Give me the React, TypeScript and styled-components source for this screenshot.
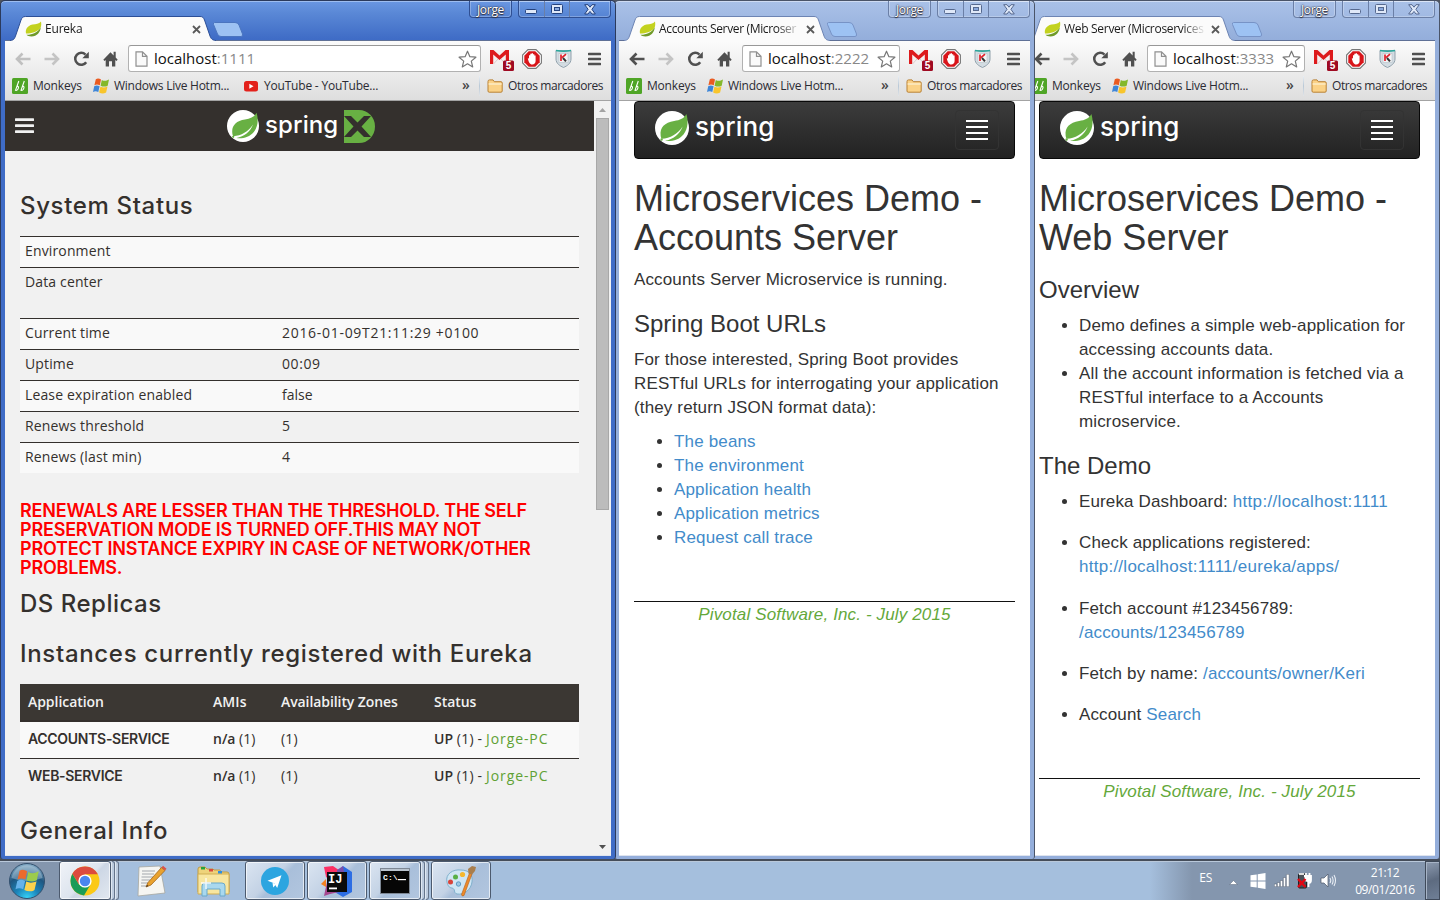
import React from "react";
import styled, { createGlobalStyle, css } from "styled-components";

const UI = `"Open Sans", "Noto Sans", sans-serif`;
const ROUND = `"Open Sans", "Noto Sans", sans-serif`;
const HEAD = `Inter, "Open Sans", sans-serif`;
const ARIAL = `"Liberation Sans", Arial, sans-serif`;

const Global = createGlobalStyle`
  *, *::before, *::after { box-sizing: border-box; }
  body { margin: 0; overflow: hidden; background: #50555e; }
  svg { display: block; flex: none; }
`;

/* ---------- shell ---------- */

const Desktop = styled.div`
  width: 1440px;
  height: 900px;
  display: flex;
  flex-direction: column;
  overflow: hidden;
`;

const Workspace = styled.div`
  position: relative;
  height: 859px;
  flex: none;
  background: #50555e;
`;

const Frame = styled.section<{ $x: number; $w: number; $z: number; $active?: boolean }>`
  position: absolute;
  top: 0;
  left: ${(p) => p.$x}px;
  width: ${(p) => p.$w}px;
  height: 859px;
  z-index: ${(p) => p.$z};
  display: flex;
  flex-direction: column;
  padding: 0 4px 3px;
  border: 1px solid ${(p) => (p.$active ? "#2b3a5c" : "#4a5468")};
  border-bottom: 0;
  border-radius: 5px 5px 3px 3px;
  background: ${(p) =>
    p.$active
      ? "linear-gradient(180deg, #6a97e2 0, #5a88d6 12px, #3f6cc6 38px, #3f6cc6 100%)"
      : "linear-gradient(180deg, #a9c1e8 0, #a3bbe4 12px, #94aedb 38px, #94aedb 100%)"};
  box-shadow: inset 0 1px 0 ${(p) => (p.$active ? "#9dbdf0" : "#cfdcf3")};
`;

const TabStrip = styled.header`
  position: relative;
  display: flex;
  align-items: flex-end;
  height: 39px;
  flex: none;
`;

const Tab = styled.div`
  position: relative;
  z-index: 1;
  width: 206px;
  height: 25px;
  margin: 0 0 -1px 5px;
  display: flex;
  align-items: center;
  padding: 1px 15px 0 15px;
`;

const TabShape = styled.svg`
  position: absolute;
  left: 0;
  top: 0;
`;

const TabTitle = styled.span<{ $ls?: number }>`
  position: relative;
  flex: 1;
  margin-left: 3px;
  overflow: hidden;
  white-space: nowrap;
  font: 12px/16px ${UI};
  letter-spacing: ${(p) => p.$ls ?? -0.35}px;
  color: #1a1a1a;
  mask-image: linear-gradient(90deg, #000 118px, transparent 142px);
`;

const Over = styled.span`
  position: relative;
  display: flex;
`;

const NewTab = styled.svg`
  margin: 0 0 3px -4px;
`;

const Caption = styled.div`
  position: absolute;
  top: 0;
  right: 0;
  display: flex;
  gap: 6px;
  height: 17px;
`;

const CaptionGroup = styled.div<{ $active?: boolean }>`
  display: flex;
  height: 17px;
  border: 1px solid ${(p) => (p.$active ? "#2f4f92" : "#6b7fa6")};
  border-top: 0;
  border-radius: 0 0 4px 4px;
  box-shadow: inset 0 0 0 1px rgba(255, 255, 255, 0.25);
`;

const CaptionButton = styled.div<{ $w: number; $active?: boolean }>`
  width: ${(p) => p.$w}px;
  display: flex;
  align-items: center;
  justify-content: center;
  & + & {
    border-left: 1px solid ${(p) => (p.$active ? "#2f4f92" : "#6b7fa6")};
  }
`;

const UserName = styled.span`
  width: 41px;
  text-align: center;
  font: 12px/18px ${UI};
  letter-spacing: -0.3px;
  color: #fff;
  text-shadow: 0 0 1px #223, 0 0 2px #334, 0 1px 1px #334;
`;

const Chrome = styled.div`
  flex: none;
  height: 61px;
  display: flex;
  flex-direction: column;
  background: linear-gradient(180deg, #fbfbfb 0, #ebebeb 32px, #dedede 100%);
  border-top: 1px solid #5f7096;
  border-bottom: 1px solid #a3a3a3;
`;

const Toolbar = styled.div`
  display: flex;
  align-items: center;
  height: 34px;
  padding: 1px 10px 0 10px;
`;

const NavIcons = styled.div`
  display: flex;
  align-items: center;
  gap: 13px;
  width: 113px;
  flex: none;
`;

const Omnibox = styled.div`
  flex: 1;
  min-width: 0;
  height: 27px;
  display: flex;
  align-items: center;
  border: 1px solid #b1b1b1;
  border-top-color: #989898;
  border-radius: 3px;
  background: #fff;
  padding: 0 3px 0 6px;
`;

const Url = styled.span`
  flex: 1;
  margin: -2px 0 0 6px;
  white-space: nowrap;
  font: 15px/24px ${UI};
  letter-spacing: 0;
  color: #111;
  i {
    font-style: normal;
    color: #888;
  }
`;

const ExtIcons = styled.div`
  display: flex;
  align-items: center;
  margin-left: 9px;
  flex: none;
`;

const Bookmarks = styled.div`
  display: flex;
  align-items: center;
  height: 25px;
  padding: 0 8px 3px 7px;
`;

const BookmarkText = styled.span<{ $w: number; $ls: number }>`
  flex: none;
  width: ${(p) => p.$w}px;
  margin-left: 5px;
  white-space: nowrap;
  font: 12px/18px ${UI};
  letter-spacing: ${(p) => p.$ls}px;
  color: #2b2b33;
`;

const Chevron = styled.span`
  margin-left: auto;
  width: 17px;
  font: 600 14px/16px ${UI};
  color: #444;
  padding-bottom: 2px;
`;

const Separator = styled.span`
  width: 1px;
  height: 20px;
  background: linear-gradient(#e8eef4, #b9c8d6, #e0e4e8);
  margin-right: 7px;
`;

const Viewport = styled.main<{ $bg: string }>`
  flex: 1;
  min-height: 0;
  display: flex;
  overflow: hidden;
  background: ${(p) => p.$bg};
  border-bottom: 1px solid #dfe4ee;
`;

/* ---------- icons ---------- */

const Leaf = () => (
  <svg width="17" height="16" viewBox="0 0 17 16">
    <path d="M16 .5C14 3 11 2.800 7.500 3.600C2 5 .3 8.500 1 12.500C7 12.500 12 11 15.500 7C16.500 4.500 16.300 2.500 16 .5Z" fill="#c3d21f" />
    <path d="M1.500 13.800C7 14 12.500 11.500 15.700 6.500C15.500 11 12 15.500 6.500 15.500C4 15.500 2.500 15 1.500 13.800Z" fill="#6f9a28" />
  </svg>
);

const CloseX = () => (
  <svg width="9" height="9" viewBox="0 0 9 9">
    <path d="M1 1L8 8M8 1L1 8" stroke="#5a5a5a" strokeWidth="1.800" />
  </svg>
);

const Arrow = ({ flip, color }: { flip?: boolean; color: string }) => (
  <svg width="16" height="14" viewBox="0 0 16 14">
    <path
      d={flip ? "M8.500 1.500L14 7L8.500 12.500M14 7H.5" : "M7.500 1.500L2 7L7.500 12.500M2 7H15.500"}
      fill="none"
      stroke={color}
      strokeWidth="2.600"
    />
  </svg>
);

const Reload = () => (
  <svg width="17" height="16" viewBox="0 0 17 16">
    <path d="M13.200 11.200A6 6 0 1 1 12.500 3.600" fill="none" stroke="#505050" strokeWidth="2.500" />
    <path d="M15.800 .8V7.300H9.300Z" fill="#505050" />
  </svg>
);

const Home = () => (
  <svg width="15" height="16" viewBox="0 0 15 16">
    <path d="M7.500 1.300L.3 8.700L1.600 9.900L2.700 9V15.500H6V10.300H9V15.500H12.300V9L13.400 9.900L14.700 8.700L12.700 6.600V.8H10.600V4.500Z" fill="#505050" />
  </svg>
);

const PageIcon = () => (
  <svg width="13" height="16" viewBox="0 0 13 16">
    <path d="M1 .8H7.500L12 5.300V15.200H1Z M7.500 .8V5.300H12" fill="#fafafa" stroke="#909090" strokeWidth="1.200" />
  </svg>
);

const Star = () => (
  <svg width="19" height="18" viewBox="0 0 19 18">
    <path d="M9.500 1.200L11.900 6.700L17.900 7.200L13.300 11.100L14.700 16.900L9.500 13.800L4.300 16.900L5.700 11.100L1.100 7.200L7.100 6.700Z" fill="#fff" stroke="#777" strokeWidth="1.200" strokeLinejoin="round" />
  </svg>
);

const Gmail = () => (
  <svg width="24" height="24" viewBox="0 0 24 24">
    <rect x="0" y="3" width="19" height="14" fill="#f4f0f0" />
    <path d="M0 3H3.500L9.500 8.500L15.500 3H19V17H15.800V7.500L9.500 13L3.200 7.500V17H0Z" fill="#dd1a1c" />
    <path d="M3.500 17L8 12M15.500 17L11 12" stroke="#dcc" />
    <rect x="13" y="13.500" width="11" height="10.500" rx="1.500" fill="#9f0a22" />
    <text x="18.500" y="22.200" textAnchor="middle" fontFamily="Liberation Sans, sans-serif" fontWeight="700" fontSize="10" fill="#fff">5</text>
  </svg>
);

const Adblock = () => (
  <svg width="20" height="20" viewBox="0 0 20 20" style={{ marginLeft: 8 }}>
    <path d="M6 .6H14L19.400 6V14L14 19.400H6L.6 14V6Z" fill="#fff" stroke="#777" strokeWidth="1.100" />
    <path d="M6.700 2.300H13.300L17.700 6.700V13.300L13.300 17.700H6.700L2.300 13.300V6.700Z" fill="#d8151a" />
    <path d="M5.800 9.500L7 9.200V6.200H8.300V4.800H9.700V4.200H11V5.200H12.300V6.500H13.600V12C13.600 14 12.200 15.600 10.200 15.600C7.800 15.600 6.600 12.800 5.800 9.500Z" fill="#fff" />
  </svg>
);

const Shield = () => (
  <svg width="17" height="19" viewBox="0 0 17 19" style={{ marginLeft: 13 }}>
    <path d="M1 1.500H16V10C16 14.500 12 17 8.500 18.500C5 17 1 14.500 1 10Z" fill="#d3dce2" stroke="#91a1ac" />
    <path d="M1 1.500Q8.500 3 16 1.500" stroke="#2aa79b" strokeWidth="1.600" fill="none" />
    <rect x="4" y="4.500" width="9" height="9" fill="#f4f5f6" stroke="#b5c0c8" strokeWidth=".6" />
    <path d="M6 5.500V12M11 5.200L7 8.600" stroke="#e0202a" strokeWidth="1.700" />
    <path d="M8 9L11 12.300" stroke="#333" strokeWidth="2" />
  </svg>
);

const MenuIcon = () => (
  <svg width="13" height="14" viewBox="0 0 13 14" style={{ marginLeft: 16 }}>
    <path d="M1 2H12M1 7H12M1 12H12" stroke="#505050" strokeWidth="2.600" strokeLinecap="round" />
  </svg>
);

const Monkeys = () => (
  <svg width="16" height="16" viewBox="0 0 16 16">
    <rect width="16" height="16" rx="1.500" fill="#4fa526" />
    <path d="M6.800 3L3.500 12.300C5.500 13 7 10 6.300 8.600C5.600 8 4.700 8.800 4.600 9.500M12.300 3L9 12.300C11 13 12.500 10 11.800 8.600C11.100 8 10.200 8.800 10.100 9.500" fill="none" stroke="#fff" strokeWidth="1.100" />
  </svg>
);

const WinFlag = () => (
  <svg width="16" height="16" viewBox="0 0 16 16">
    <path d="M2.800 1.200C4.800 -.2 6.500 .6 8 1.500L6.800 7.300C4.900 6.300 3.200 6.200 1.400 7.300Z" fill="#ea5b21" />
    <path d="M8.800 2C11 3.200 13 3.200 16 1.600L14.700 7.700C12.300 9 10 8.800 7.600 7.700Z" fill="#84b82a" />
    <path d="M1.200 8.200C3.100 7.100 4.700 7.300 6.600 8.200L5.300 14C3.300 13 1.700 13 0 14Z" fill="#3e86d8" />
    <path d="M7.400 8.700C9.700 9.800 11.700 9.800 14.500 8.500L13.100 14.400C10.700 15.900 8.300 15.600 6.100 14.500Z" fill="#f8c52c" />
  </svg>
);

const YouTube = () => (
  <svg width="15" height="11" viewBox="0 0 15 11">
    <rect width="14" height="10.500" rx="2.500" fill="#e3211b" />
    <path d="M5.300 2.700L9.500 5.200L5.300 7.700Z" fill="#fff" />
  </svg>
);

const Folder = () => (
  <svg width="16" height="14" viewBox="0 0 16 14">
    <path d="M1 12V2.500Q1 .9 2.500 .9H6L7.300 2.700H14Q15.200 2.700 15.200 4V12Q15.200 13.200 14 13.200H2.200Q1 13.200 1 12Z" fill="#fbd287" stroke="#b98135" />
    <path d="M1.600 5H14.600" stroke="#fdebc5" strokeWidth="1.500" />
  </svg>
);

const SpringMark = ({ size }: { size: number }) => (
  <svg width={size} height={size} viewBox="0 0 32 32">
    <circle cx="16" cy="16" r="16" fill="#fff" />
    <path d="M29.500 2.800C27.500 7 23.500 8.500 18 9.400C9 10.800 4.500 15.500 5.300 23C5.400 24.500 5.800 25.600 6.500 26.200C14 25.800 21.500 21.500 26 14.500C23.500 21.500 17 26.800 9.500 28C15 29 22.500 27.300 26.800 22C31.500 16 31.300 8.500 29.500 2.800Z" fill="#68b043" />
    <circle cx="6.200" cy="26.800" r="1.100" fill="#68b043" />
  </svg>
);

/* ---------- browser window ---------- */

type WindowProps = {
  x: number;
  w: number;
  z: number;
  active?: boolean;
  title: string;
  titleSpacing?: number;
  port: string;
  bg: string;
  back: boolean;
  youtube?: boolean;
  children: React.ReactNode;
};

function BrowserWindow({ x, w, z, active, title, titleSpacing, port, bg, back, youtube, children }: WindowProps) {
  const edge = active ? "#2c4f97" : "#6d84b3";
  const glyph = active ? "#24427e" : "#56698f";
  return (
    <Frame $x={x} $w={w} $z={z} $active={active}>
      <TabStrip>
        <Tab>
          <TabShape width="206" height="25" viewBox="0 0 206 25">
            <path d="M0 24.500C4 24.300 4.500 22.500 5.500 20L11 4C12 1.500 13 .5 15.500 .5H190C192.500 .5 193.500 1.500 194.500 4L200 20C201 22.500 202 24.300 206 24.500V25H0Z" fill="#fbfbfb" />
            <path d="M0 24.500C4 24.300 4.500 22.500 5.500 20L11 4C12 1.500 13 .5 15.500 .5H190C192.500 .5 193.500 1.500 194.500 4L200 20C201 22.500 202 24.300 206 24.500" fill="none" stroke={edge} />
          </TabShape>
          <Over><Leaf /></Over>
          <TabTitle $ls={titleSpacing}>{title}</TabTitle>
          <Over><CloseX /></Over>
        </Tab>
        <NewTab width="32" height="15" viewBox="0 0 32 15">
          <path d="M2.500 .5H23Q26 .5 27 3L30.500 12Q31 14.500 29 14.500H9Q6.500 14.500 5.500 12L1.500 2.500Q1 .5 2.500 .5Z" fill="#9dc2f3" stroke={active ? "#4b75bf" : "#7793c6"} />
        </NewTab>
        <Caption>
          <CaptionGroup $active={active}>
            <UserName>Jorge</UserName>
          </CaptionGroup>
          <CaptionGroup $active={active}>
            <CaptionButton $w={25} $active={active}>
              <svg width="13" height="6" viewBox="0 0 13 6" style={{ marginTop: 5 }}>
                <rect x=".5" y=".5" width="11" height="4" rx="1" fill="#dfe8f8" stroke={glyph} />
              </svg>
            </CaptionButton>
            <CaptionButton $w={25} $active={active}>
              <svg width="12" height="10" viewBox="0 0 12 10">
                <rect x=".5" y=".5" width="11" height="9" rx="1" fill="#dfe8f8" stroke={glyph} />
                <rect x="3.500" y="3.500" width="5" height="3" fill="#8aa9de" stroke={glyph} />
              </svg>
            </CaptionButton>
            <CaptionButton $w={41} $active={active}>
              <svg width="12" height="11" viewBox="0 0 12 11">
                <path d="M.7 .7H4L6 3.200L8 .7H11.300L7.900 5.300L11.300 10H8L6 7.400L4 10H.7L4.100 5.300Z" fill="#dfe8f8" stroke={glyph} />
              </svg>
            </CaptionButton>
          </CaptionGroup>
        </Caption>
      </TabStrip>
      <Chrome>
        <Toolbar>
          <NavIcons>
            <Arrow color={back ? "#505050" : "#c0c0c0"} />
            <Arrow flip color="#c4c4c4" />
            <Reload />
            <Home />
          </NavIcons>
          <Omnibox>
            <PageIcon />
            <Url>localhost<i>:{port}</i></Url>
            <Star />
          </Omnibox>
          <ExtIcons>
            <Gmail />
            <Adblock />
            <Shield />
            <MenuIcon />
          </ExtIcons>
        </Toolbar>
        <Bookmarks>
          <Monkeys />
          <BookmarkText $w={60} $ls={-0.2}>Monkeys</BookmarkText>
          <WinFlag />
          <BookmarkText $w={130} $ls={-0.25}>Windows Live Hotm...</BookmarkText>
          {youtube && (
            <>
              <YouTube />
              <BookmarkText $w={120} $ls={-0.2}>YouTube - YouTube...</BookmarkText>
            </>
          )}
          <Chevron>»</Chevron>
          <Separator />
          <Folder />
          <BookmarkText $w={95} $ls={-0.4}>Otros marcadores</BookmarkText>
        </Bookmarks>
      </Chrome>
      <Viewport $bg={bg}>{children}</Viewport>
    </Frame>
  );
}

/* ---------- Eureka page ---------- */

const EurekaPage = styled.div`
  flex: 1;
  height: 100%;
  overflow: hidden;
  font: 14px/20px ${ROUND};
  color: #34302d;
`;

const EurekaHeader = styled.div`
  height: 50px;
  background: #34302d;
  display: flex;
  align-items: center;
  padding-left: 10px;
`;

const Burger = styled.svg`
  margin-right: 193px;
`;

const SpringWord = styled.span<{ $size: number; $ls: number; $mt?: number }>`
  font: 500 ${(p) => p.$size}px/32px ${HEAD};
  letter-spacing: ${(p) => p.$ls}px;
  color: #fff;
  margin: ${(p) => p.$mt ?? -3}px 0 0 6px;
`;

const EurekaBody = styled.div`
  width: 574px;
  padding: 41px 0 0 15px;
`;

const EurekaHeading = styled.h1<{ $mt?: number; $mb: number; $ls: number }>`
  margin: ${(p) => p.$mt ?? 0}px 0 ${(p) => p.$mb}px;
  font: 500 24px/28px ${HEAD};
  letter-spacing: ${(p) => p.$ls}px;
  white-space: nowrap;
`;

const StatusRow = styled.div<{ $tall?: boolean; $odd?: boolean }>`
  display: flex;
  height: ${(p) => (p.$tall ? 51 : 31)}px;
  border-top: 1px solid #34302d;
  padding: 4px 5px 0;
  background: ${(p) => (p.$odd ? "#f9f9f9" : "transparent")};
`;

const Txt = styled.span<{ $w?: number; $ls?: number; $bold?: boolean; $wide?: boolean; $color?: string }>`
  flex: none;
  ${(p) => p.$w && css`width: ${p.$w}px;`}
  white-space: nowrap;
  letter-spacing: ${(p) => p.$ls ?? 0}px;
  font-weight: ${(p) => (p.$bold ? 600 : 400)};
  ${(p) => p.$wide && css`font-family: ${HEAD};`}
  ${(p) => p.$color && css`color: ${p.$color};`}
`;

const Warning = styled.div`
  margin: 28px 0 13px;
  font: 600 18px/19px ${HEAD};
  color: #f00;
  white-space: nowrap;
`;

const WarningLine = styled.div<{ $ls: number }>`
  letter-spacing: ${(p) => p.$ls}px;
`;

const InstHead = styled.div`
  display: flex;
  align-items: center;
  height: 38px;
  padding: 0 8px;
  background: #3b3733;
  border-bottom: 2px solid #34302d;
  color: #f1f1f1;
`;

const InstRow = styled.div<{ $odd?: boolean }>`
  display: flex;
  align-items: center;
  height: 37px;
  padding: 0 8px ${(p) => (p.$odd ? 2 : 3)}px;
  background: ${(p) => (p.$odd ? "#f9f9f9" : "transparent")};
  border-bottom: ${(p) => (p.$odd ? "1px solid #34302d" : "0")};
`;

const Scrollbar = styled.div`
  width: 17px;
  flex: none;
  display: flex;
  flex-direction: column;
  align-items: center;
  background: #f1f1f1;
`;

const Thumb = styled.div`
  width: 13px;
  height: 392px;
  margin: 6px 0 auto;
  background: #bcbcbc;
  border: 1px solid #a8a8a8;
`;

const STATUS: { label: string; value: string; vls?: number; tall?: boolean }[] = [
  { label: "Environment", value: "" },
  { label: "Data center", value: "", tall: true },
  { label: "Current time", value: "2016-01-09T21:11:29 +0100", vls: 0.7 },
  { label: "Uptime", value: "00:09", vls: 0.6 },
  { label: "Lease expiration enabled", value: "false" },
  { label: "Renews threshold", value: "5" },
  { label: "Renews (last min)", value: "4" },
];

function Eureka() {
  return (
    <>
      <EurekaPage>
        <EurekaHeader>
          <Burger width="19" height="16" viewBox="0 0 19 16">
            <path d="M1 1.700H18M1 7.700H18M1 13.700H18" stroke="#f1f1f1" strokeWidth="2.800" strokeLinecap="round" />
          </Burger>
          <SpringMark size={32} />
          <SpringWord $size={24} $ls={0.1} $mt={-2}>spring</SpringWord>
          <svg width="31" height="33" viewBox="0 0 31 33" style={{ marginLeft: 6 }}>
            <path d="M0 0H15A16 16.500 0 0 1 15 33H0Z" fill="#68b043" />
            <path d="M0 6H7L13.500 12.500L20 6H27L17.500 16.500L27 27H20L13.500 20.500L7 27H0L9.500 16.500Z" fill="#34302d" />
          </svg>
        </EurekaHeader>
        <EurekaBody>
          <EurekaHeading $mb={16} $ls={0.65}>System Status</EurekaHeading>
          {STATUS.map((s, i) => (
            <StatusRow key={s.label} $tall={s.tall} $odd={i % 2 === 0}>
              <Txt $w={257} $ls={0.14}>{s.label}</Txt>
              <Txt $ls={s.vls}>{s.value}</Txt>
            </StatusRow>
          ))}
          <Warning>
            <WarningLine $ls={-0.2}>RENEWALS ARE LESSER THAN THE THRESHOLD. THE SELF</WarningLine>
            <WarningLine $ls={-0.2}>PRESERVATION MODE IS TURNED OFF.THIS MAY NOT</WarningLine>
            <WarningLine $ls={-0.2}>PROTECT INSTANCE EXPIRY IN CASE OF NETWORK/OTHER</WarningLine>
            <WarningLine $ls={-0.2}>PROBLEMS.</WarningLine>
          </Warning>
          <EurekaHeading $mb={22} $ls={0.5}>DS Replicas</EurekaHeading>
          <EurekaHeading $mb={16} $ls={0.68}>Instances currently registered with Eureka</EurekaHeading>
          <InstHead>
            <Txt $w={185} $bold $ls={-0.05}>Application</Txt>
            <Txt $w={68} $bold $ls={0.1}>AMIs</Txt>
            <Txt $w={153} $bold $ls={-0.08}>Availability Zones</Txt>
            <Txt $bold $ls={-0.05}>Status</Txt>
          </InstHead>
          {["ACCOUNTS-SERVICE", "WEB-SERVICE"].map((name, i) => (
            <InstRow key={name} $odd={i === 0}>
              <Txt $w={185} $bold $wide $ls={-0.3}>{name}</Txt>
              <Txt $w={68}><Txt $bold>n/a</Txt> (1)</Txt>
              <Txt $w={153} $ls={0.2}>(1)</Txt>
              <Txt $ls={0.2}><Txt $bold>UP</Txt> (1) - <Txt $ls={0.9} $color="#5fa134">Jorge-PC</Txt></Txt>
            </InstRow>
          ))}
          <EurekaHeading $mt={21} $mb={0} $ls={0.7}>General Info</EurekaHeading>
        </EurekaBody>
      </EurekaPage>
      <Scrollbar>
        <svg width="7" height="4" viewBox="0 0 7 4" style={{ marginTop: 7 }}>
          <path d="M0 4L3.500 0L7 4Z" fill="#a3a3a3" />
        </svg>
        <Thumb />
        <svg width="7" height="4" viewBox="0 0 7 4" style={{ marginBottom: 6 }}>
          <path d="M0 0L3.500 4L7 0Z" fill="#505050" />
        </svg>
      </Scrollbar>
    </>
  );
}

/* ---------- Bootstrap pages ---------- */

const DemoPage = styled.div`
  width: 396px;
  padding-left: 15px;
  height: 100%;
  flex: none;
  overflow: hidden;
  font: 17px/24px ${ARIAL};
  letter-spacing: 0.14px;
  color: #333;
  h1 { margin: 20px 0 11px; font: 500 36px/39px ${ARIAL}; letter-spacing: 0; }
  h2 { margin: 19px 0 11px; font: 500 24px/26px ${ARIAL}; letter-spacing: 0; }
  h1 + h2 { margin-top: 20px; }
  p { margin: 0; }
`;

const Link = styled.a<{ $ls?: number }>`
  color: #428bca;
  text-decoration: none;
  letter-spacing: ${(p) => p.$ls ?? 0.16}px;
`;

const NavBar = styled.nav`
  display: flex;
  justify-content: space-between;
  align-items: center;
  height: 58px;
  padding: 0 15px 0 20px;
  border: 1px solid #080808;
  border-radius: 4px;
  background: linear-gradient(180deg, #3c3c3c, #222);
`;

const Brand = styled.div`
  display: flex;
  align-items: center;
  padding-bottom: 5px;
`;

const Toggle = styled.div`
  width: 44px;
  height: 40px;
  display: flex;
  flex-direction: column;
  align-items: center;
  justify-content: center;
  gap: 4px;
  border: 1px solid #333;
  border-radius: 4px;
`;

const ToggleBar = styled.span`
  width: 22px;
  height: 2px;
  background: #fff;
`;

const List = styled.ul<{ $gap: number; $mt?: number }>`
  margin: ${(p) => p.$mt ?? 0}px 0 0;
  padding: 0 0 0 40px;
  display: flex;
  flex-direction: column;
  gap: ${(p) => p.$gap}px;
`;

const Item = styled.li`
  white-space: nowrap;
`;

const Footer = styled.footer`
  margin-top: 51px;
  border-top: 1px solid #111;
  text-align: center;
  font-style: italic;
  color: #64a83a;
  padding-top: 1px;
`;

function SpringNav() {
  return (
    <NavBar>
      <Brand>
        <SpringMark size={34} />
        <SpringWord $size={26} $ls={0.1} $mt={-2}>spring</SpringWord>
      </Brand>
      <Toggle>
        <ToggleBar />
        <ToggleBar />
        <ToggleBar />
        <ToggleBar />
      </Toggle>
    </NavBar>
  );
}

function Accounts() {
  return (
    <DemoPage>
      <SpringNav />
      <h1>Microservices Demo -<br />Accounts Server</h1>
      <p>Accounts Server Microservice is running.</p>
      <h2>Spring Boot URLs</h2>
      <p>
        For those interested, Spring Boot provides<br />
        RESTful URLs for interrogating your application<br />
        (they return JSON format data):
      </p>
      <List $gap={0} $mt={10}>
        {["The beans", "The environment", "Application health", "Application metrics", "Request call trace"].map((t) => (
          <Item key={t}><Link>{t}</Link></Item>
        ))}
      </List>
      <Footer>Pivotal Software, Inc. - July 2015</Footer>
    </DemoPage>
  );
}

function WebServer() {
  return (
    <DemoPage>
      <SpringNav />
      <h1>Microservices Demo -<br />Web Server</h1>
      <h2>Overview</h2>
      <List $gap={0}>
        <Item>Demo defines a simple web-application for<br />accessing accounts data.</Item>
        <Item>All the account information is fetched via a<br />RESTful interface to a Accounts<br />microservice.</Item>
      </List>
      <h2>The Demo</h2>
      <List $gap={17.3}>
        <Item>Eureka Dashboard: <Link $ls={0.33}>http://localhost:1111</Link></Item>
        <Item>Check applications registered:<br /><Link $ls={0.26}>http://localhost:1111/eureka/apps/</Link></Item>
        <Item>Fetch account #123456789:<br /><Link>/accounts/123456789</Link></Item>
        <Item>Fetch by name: <Link>/accounts/owner/Keri</Link></Item>
        <Item>Account <Link>Search</Link></Item>
      </List>
      <Footer>Pivotal Software, Inc. - July 2015</Footer>
    </DemoPage>
  );
}

/* ---------- taskbar ---------- */

const Taskbar = styled.footer`
  flex: none;
  height: 41px;
  display: flex;
  border-top: 2px solid #454d5a;
  box-shadow: inset 0 1px 0 #b9c8da;
  background: linear-gradient(90deg, #8496ae 0, #8496ae 112px, #a5bfdd 120px, #a5bfdd 1150px, #8496ae 1192px, #8496ae 100%);
`;

const Slot = styled.div<{ $w: number; $ml?: number }>`
  width: ${(p) => p.$w}px;
  margin-left: ${(p) => p.$ml ?? 0}px;
  display: flex;
  align-items: center;
  justify-content: center;
`;

const TaskButton = styled(Slot)`
  height: 39px;
  border: 1px solid #4c5a6e;
  border-radius: 3px;
  box-shadow: inset 0 0 0 1px rgba(255, 255, 255, 0.65);
  background: linear-gradient(135deg, #dbe5f1 0, #c3d2e5 45%, #a9bfda 55%, #b2c6df 100%);
`;

const ActiveTaskButton = styled(TaskButton)`
  background: linear-gradient(135deg, #f0f3f8 0, #dde4ee 50%, #cdd7e5 55%, #e2e8f0 100%);
`;

const Stack = styled.div`
  width: 4px;
  height: 39px;
  border: 1px solid #64748b;
  border-left-color: #dfe8f2;
  border-radius: 0 3px 3px 0;
  background: #bccbde;
`;

const Tray = styled.div`
  margin-left: auto;
  display: flex;
  align-items: center;
  font: 12px/16px ${UI};
  color: #fff;
`;

const Clock = styled.div`
  width: 64px;
  margin: 0 7px 0 16px;
  text-align: center;
  letter-spacing: -0.4px;
  line-height: 17px;
`;

const ShowDesktop = styled.div`
  align-self: stretch;
  width: 15px;
  margin-left: 1px;
  border: 1px solid #3f4a5a;
  background: linear-gradient(160deg, #8d9bb0, #5d6b80 50%, #6f7f96);
  box-shadow: inset 1px 1px 0 #a7b4c6;
`;

const StartOrb = () => (
  <svg width="38" height="38" viewBox="0 0 38 38">
    <defs>
      <radialGradient id="orb" cx=".5" cy="1" r=".95">
        <stop offset="0" stopColor="#38d7fb" />
        <stop offset=".35" stopColor="#1c86bb" />
        <stop offset=".7" stopColor="#1f5680" />
        <stop offset="1" stopColor="#7ea6c2" />
      </radialGradient>
    </defs>
    <circle cx="19" cy="19" r="17.500" fill="url(#orb)" stroke="#33506e" />
    <path d="M3.500 16A15.800 15.800 0 0 1 34.500 16Q19 22 3.500 16Z" fill="#dbe8f2" opacity=".35" />
    <g transform="translate(7.500 7) scale(1.450)">
      <path d="M2.800 1.200C4.800 -.2 6.500 .6 8 1.500L6.800 7.300C4.900 6.300 3.200 6.200 1.400 7.300Z" fill="#ec6a2c" />
      <path d="M8.800 2C11 3.200 13 3.200 16 1.600L14.700 7.700C12.300 9 10 8.800 7.600 7.700Z" fill="#9ccb4c" />
      <path d="M1.200 8.200C3.100 7.100 4.700 7.300 6.600 8.200L5.300 14C3.300 13 1.700 13 0 14Z" fill="#66b2ea" />
      <path d="M7.400 8.700C9.700 9.800 11.700 9.800 14.500 8.500L13.100 14.400C10.700 15.900 8.300 15.600 6.100 14.500Z" fill="#fcd24d" />
    </g>
  </svg>
);

const ChromeIcon = () => (
  <svg width="30" height="30" viewBox="0 0 30 30">
    <circle cx="15" cy="15" r="14.500" fill="#fbc916" />
    <path d="M2.400 7.800L9 18.500L15 21.500L20.500 18.500L14 29.400A14.500 14.500 0 0 1 2.400 7.800Z" fill="#1a9c57" />
    <path d="M2.400 7.800A14.500 14.500 0 0 1 27.800 8.300H15L8.800 18Z" fill="#dc4b3e" />
    <circle cx="15" cy="15" r="6.600" fill="#fff" />
    <circle cx="15" cy="15" r="5.200" fill="#4a86f0" />
  </svg>
);

const NotesIcon = () => (
  <svg width="32" height="32" viewBox="0 0 32 32">
    <path d="M4 2L25 1L30 28L3 31Z" fill="#f5f5f2" stroke="#a7a79f" strokeWidth=".8" />
    <path d="M7 6H20M7 9H19M6.500 12H18M6.500 15H15M6 18H13M6 21H11" stroke="#a3a7ab" strokeWidth="1.200" />
    <path d="M11 22L13 17.500L26.500 2.500L30 5.500L16 20Z" fill="#e9a22e" stroke="#a3661b" strokeWidth=".8" />
    <path d="M26.500 2.500L28 .8L31.500 3.800L30 5.500Z" fill="#d9534a" />
    <path d="M11 22L12 19.700L13.500 21Z" fill="#4a3a28" />
  </svg>
);

const ExplorerIcon = () => (
  <svg width="34" height="32" viewBox="0 0 34 32">
    <path d="M2 4Q2 2 4 2H9L11 4H17L18 5H24L25 7H31Q33 7 33 9V27H2Z" fill="#eed37b" stroke="#bf9a41" />
    <path d="M2 9H33V29H2Z" fill="#f8e6a0" stroke="#d1ae55" />
    <rect x="5" y="2" width="4" height="2.500" fill="#26a33c" />
    <rect x="13" y="4" width="4" height="2.500" fill="#dd4a3c" />
    <rect x="22" y="6" width="4" height="2.500" fill="#2d8fe0" />
    <path d="M6 31V21Q6 18 9 18H26Q29 18 29 21V31H24V24H11V31Z" fill="#a9d8ee" stroke="#69a9cc" />
    <path d="M10 13V24M5 18H15" stroke="#fff" strokeWidth="1.300" opacity=".9" />
  </svg>
);

const TelegramIcon = () => (
  <svg width="28" height="28" viewBox="0 0 28 28">
    <circle cx="14" cy="14" r="14" fill="#2ca5e0" />
    <path d="M6.500 13.700L20.500 8.300L16.200 21L13.200 16.300Z" fill="#fff" />
    <path d="M11.500 15.500L12.200 20.500L15 17.500Z" fill="#fff" />
  </svg>
);

const IdeaIcon = () => (
  <svg width="32" height="32" viewBox="0 0 32 32">
    <path d="M3 2L12 1L22 8L16 20L5 12Z" fill="#fb3064" />
    <path d="M18 6L22 1L31 7V27L22 32L12 26Z" fill="#2c6de4" />
    <path d="M0 19L5 14V22Z" fill="#f58220" />
    <path d="M3 31L6 17L18 27L9 29Z" fill="#a5478f" />
    <path d="M16 5L22 1L24 12H16Z" fill="#7b4fa9" />
    <rect x="6" y="7" width="20" height="20" fill="#0b0b0b" />
    <text x="7" y="18" fontFamily="Liberation Mono, monospace" fontWeight="700" fontSize="12" fill="#fff">IJ</text>
    <rect x="8" y="22.500" width="8" height="1.800" fill="#fff" />
  </svg>
);

const CmdIcon = () => (
  <svg width="30" height="26" viewBox="0 0 30 26">
    <rect x=".5" y=".5" width="29" height="25" fill="#060606" stroke="#7d8794" />
    <rect x="1" y="1" width="28" height="2" fill="#b9c3ce" />
    <text x="3" y="11.500" fontFamily="Liberation Mono, monospace" fontWeight="700" fontSize="8" letterSpacing=".2" fill="#fff">C:\</text>
    <rect x="18" y="11" width="8" height="1.200" fill="#fff" />
  </svg>
);

const PaintIcon = () => (
  <svg width="34" height="32" viewBox="0 0 34 32">
    <path d="M3 17C1 9 9 4 17 5C25 5 29 10 28 17C27 25 20 30 13 29C9 28 12 24 8 23C5 23 3.500 20 3 17Z" fill="#cfe6f4" stroke="#7fb0cd" />
    <circle cx="6.500" cy="17" r="2.500" fill="#d8433a" />
    <circle cx="11.500" cy="12" r="2.500" fill="#58b047" />
    <circle cx="18.500" cy="9.500" r="2.600" fill="#f5b72d" />
    <circle cx="14.500" cy="19" r="2.200" fill="#9cc8e4" stroke="#5f9cc4" />
    <path d="M17.500 29.500L25.500 8L28 9L20 30.500Q18 32 17.500 29.500Z" fill="#ed8a2a" stroke="#b4601a" strokeWidth=".6" />
    <path d="M24.500 8.500L24 4L28 1L32 2L31 6L28 9.500Z" fill="#a97e4d" />
  </svg>
);

function TrayIcons() {
  return (
    <>
      <svg width="9" height="5" viewBox="0 0 9 5" style={{ marginLeft: 17, marginTop: 3 }}>
        <path d="M.5 4.500L4.500 .5L8.500 4.500Z" fill="#fff" stroke="#5a6678" strokeWidth=".5" />
      </svg>
      <svg width="16" height="16" viewBox="0 0 16 16" style={{ marginLeft: 12 }}>
        <path d="M.5 2.300L6.700 1.400V7.400H.5ZM7.700 1.200L15.500 0V7.400H7.700ZM.5 8.400H6.700V14.500L.5 13.700ZM7.700 8.400H15.500V15.900L7.700 14.700Z" fill="#fff" />
      </svg>
      <svg width="16" height="13" viewBox="0 0 16 13" style={{ marginLeft: 8 }}>
        <path d="M.3 10H2.700V12.700H.3ZM3.300 8.500H5.700V12.700H3.300ZM6.300 6.500H8.700V12.700H6.300ZM9.300 3.500H11.700V12.700H9.300ZM12.300 .3H15.200V12.700H12.300Z" fill="#fff" stroke="#4b5769" strokeWidth=".5" />
      </svg>
      <svg width="16" height="17" viewBox="0 0 16 17" style={{ marginLeft: 7 }}>
        <rect x="1.500" y="2" width="8" height="14" rx="1" fill="#4b5058" stroke="#222" />
        <path d="M2 1H7V3H2Z" fill="#ddd" />
        <path d="M7 4H14V8Q14 11 11.500 11V15M9 4V1M12.500 4V1" stroke="#fff" strokeWidth="1.800" fill="none" />
        <path d="M7.500 4.500H14V8Q14 10 11 10Q8 10 7.500 8Z" fill="#fff" />
        <path d="M1 7L8.500 15M8.500 7L1 15" stroke="#e30613" strokeWidth="2.500" />
      </svg>
      <svg width="17" height="15" viewBox="0 0 17 15" style={{ marginLeft: 7 }}>
        <path d="M1 5H4L8 1V14L4 10H1Z" fill="#fff" stroke="#4b5769" strokeWidth=".7" />
        <path d="M10 5Q11.500 7.500 10 10M12 3.500Q14.300 7.500 12 11.500M14 2Q17 7.500 14 13" fill="none" stroke="#e9eef5" strokeWidth="1.100" />
      </svg>
    </>
  );
}

export default function App() {
  return (
    <Desktop>
      <Global />
      <Workspace>
        <BrowserWindow x={0} w={616} z={3} active title="Eureka" titleSpacing={-0.2} port="1111" bg="#f1f1f1" back={false} youtube>
          <Eureka />
        </BrowserWindow>
        <BrowserWindow x={614} w={421} z={2} title="Accounts Server (Microser" port="2222" bg="#fff" back>
          <Accounts />
        </BrowserWindow>
        <BrowserWindow x={1019} w={421} z={1} title="Web Server (Microservices" titleSpacing={-0.3} port="3333" bg="#fff" back>
          <WebServer />
        </BrowserWindow>
      </Workspace>
      <Taskbar>
        <Slot $w={38} $ml={8}><StartOrb /></Slot>
        <ActiveTaskButton $w={52} $ml={13}><ChromeIcon /></ActiveTaskButton>
        <Stack />
        <Stack />
        <Slot $w={32} $ml={16}><NotesIcon /></Slot>
        <Slot $w={34} $ml={29}><ExplorerIcon /></Slot>
        <TaskButton $w={60} $ml={15}><TelegramIcon /></TaskButton>
        <TaskButton $w={60} $ml={2}><IdeaIcon /></TaskButton>
        <TaskButton $w={52} $ml={2}><CmdIcon /></TaskButton>
        <Stack />
        <Stack />
        <TaskButton $w={60} $ml={2}><PaintIcon /></TaskButton>
        <Tray>
          <Txt $ls={-0.3} style={{ marginBottom: 5 }}>ES</Txt>
          <TrayIcons />
          <Clock>21:12<br />09/01/2016</Clock>
          <ShowDesktop />
        </Tray>
      </Taskbar>
    </Desktop>
  );
}
